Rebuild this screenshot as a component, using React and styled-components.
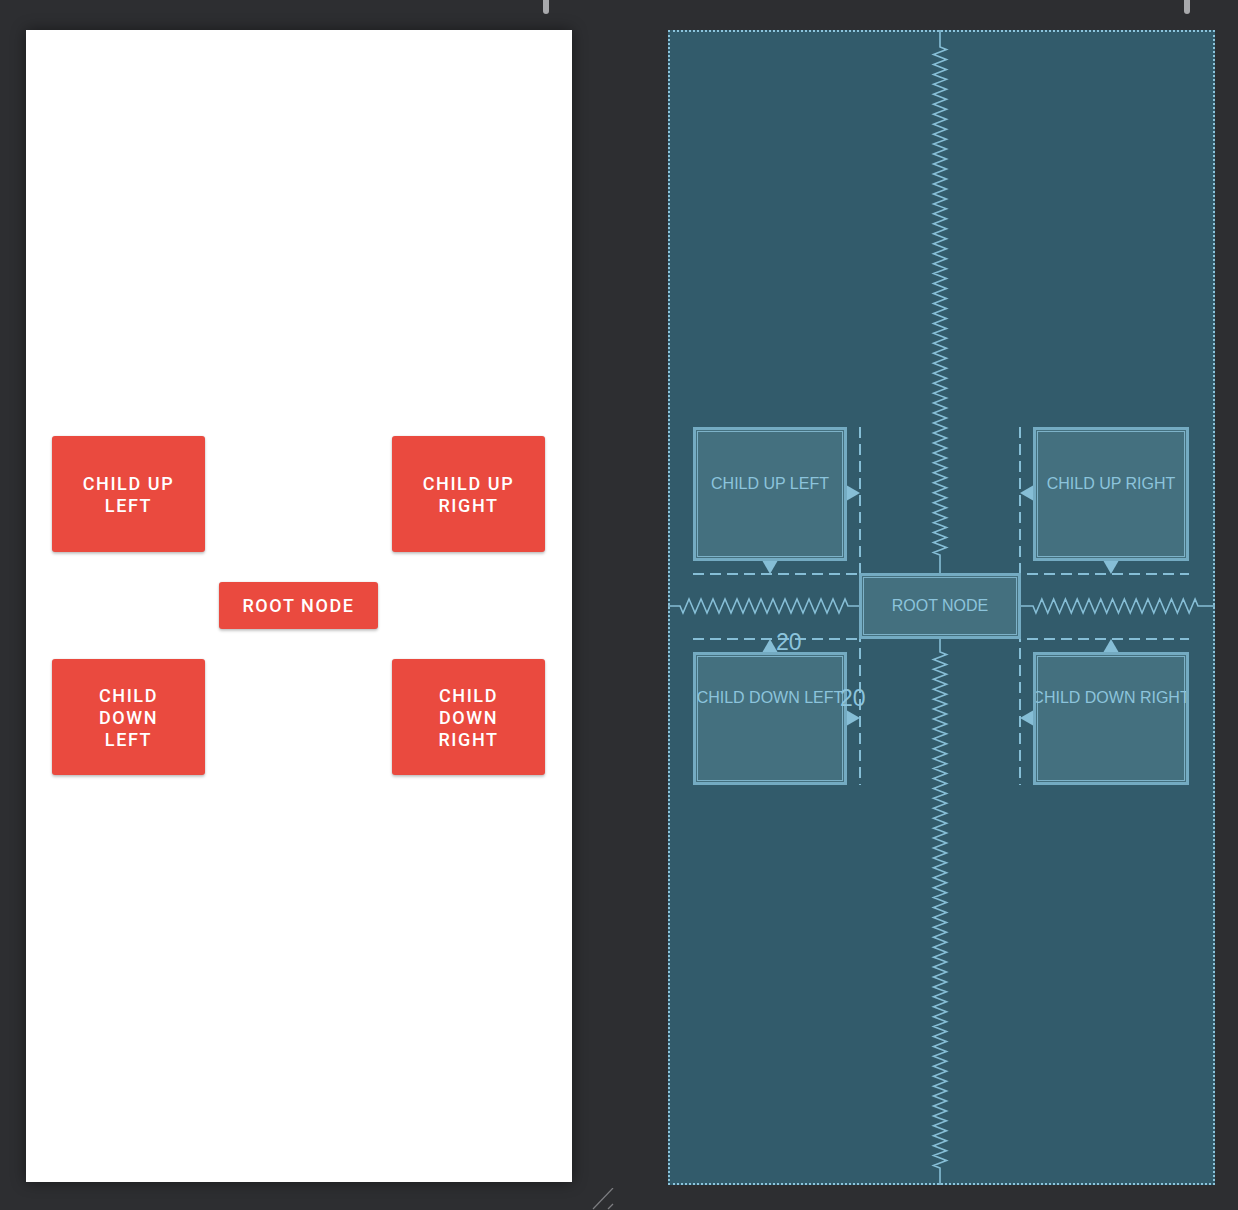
import React from 'react';
import styled, { createGlobalStyle } from 'styled-components';

const GlobalStyle = createGlobalStyle`
  html, body {
    margin: 0;
    padding: 0;
    background: #2d2e31;
  }
  body {
    font-family: 'Roboto', 'Liberation Sans', sans-serif;
  }
`;

const Workspace = styled.div`
  display: flex;
  align-items: flex-start;
  width: 1238px;
  height: 1210px;
  overflow: hidden;
  padding-left: 26px;
  box-sizing: border-box;
  background: #2d2e31;
`;

const Column = styled.div`
  display: flex;
  flex-direction: column;
  width: ${p => p.$width}px;
`;

const HandleBar = styled.div`
  display: flex;
  justify-content: flex-end;
  height: 30px;
  padding-right: ${p => p.$right}px;
`;

const Handle = styled.div`
  width: 6px;
  height: 14px;
  background: #a8a9ac;
  border-radius: 0 0 3px 3px;
`;

const Gutter = styled.div`
  display: flex;
  flex-direction: column;
  justify-content: flex-end;
  width: 96px;
  height: 1210px;
  padding-left: 19px;
  box-sizing: border-box;
`;

/* ---------- design view ---------- */

const DesignPanel = styled.div`
  display: flex;
  align-items: center;
  justify-content: center;
  height: 1152px;
  background: #ffffff;
  box-shadow: 0 0 14px rgba(0, 0, 0, 0.45);
`;

const ButtonGrid = styled.div`
  display: grid;
  grid-template-columns: 153px 159px 153px;
  grid-template-rows: 116px 47px 116px;
  column-gap: 14px;
  row-gap: 30px;
  margin: 0 1px 2px 0;
`;

const RedButton = styled.div`
  grid-column: ${p => p.$col};
  grid-row: ${p => p.$row};
  display: flex;
  align-items: center;
  justify-content: center;
  text-align: center;
  background: #ea4a3f;
  color: #ffffff;
  border-radius: 3px;
  box-shadow: 0 2px 3px rgba(0, 0, 0, 0.22), 0 0 2px rgba(0, 0, 0, 0.12);
  font-family: 'Roboto', sans-serif;
  font-weight: 500;
  font-size: 18px;
  line-height: 22px;
  letter-spacing: 1.6px;
  padding: 2px ${p => p.$pad}px 0;
`;

/* ---------- blueprint view ---------- */

const Blueprint = styled.div`
  position: relative;
  height: 1155px;
  background: #325b6b;

  &::before {
    content: '';
    position: absolute;
    inset: 0;
    border: 2px dotted #8cc4dc;
    pointer-events: none;
  }
`;

const Wires = styled.svg`
  position: absolute;
  left: 0;
  top: 0;
  overflow: visible;
`;

const Node = styled.div`
  position: absolute;
  left: ${p => p.$x}px;
  top: ${p => p.$y}px;
  width: ${p => p.$w}px;
  height: ${p => p.$h}px;
  box-sizing: border-box;
  background: #44707f;
  border: 3px solid #74abc2;
  box-shadow: inset 0 0 0 1px #44707f, inset 0 0 0 2px #7db2c8;
  display: flex;
  flex-direction: column;
  align-items: center;
  justify-content: ${p => (p.$textTop == null ? 'center' : 'flex-start')};
  padding-top: ${p => (p.$textTop == null ? 0 : p.$textTop)}px;
  overflow: hidden;
`;

const NodeLabel = styled.span`
  font-family: 'Liberation Sans', Arial, sans-serif;
  font-size: 16px;
  line-height: 18px;
  color: #8cc4dc;
  white-space: nowrap;
`;

const Margin = styled.span`
  position: absolute;
  left: ${p => p.$x}px;
  top: ${p => p.$y}px;
  font-family: 'Liberation Sans', Arial, sans-serif;
  font-size: 23px;
  line-height: 23px;
  color: #8cc4dc;
`;

const LINE = '#86bed6';

function spring(axis, fixed, from, to, leadA, leadB, period, amp) {
  const a = from + leadA;
  const b = to - leadB;
  const n = Math.max(1, Math.round((b - a) / period));
  const step = (b - a) / n;
  const pt = (along, off) =>
    axis === 'v' ? `${fixed + off} ${along}` : `${along} ${fixed + off}`;
  let d = `M${pt(from, 0)} L${pt(a, 0)}`;
  for (let i = 0; i < n; i++) {
    d += ` L${pt(a + step * (i + 0.25), amp)} L${pt(a + step * (i + 0.75), -amp)} L${pt(a + step * (i + 1), 0)}`;
  }
  d += ` L${pt(to, 0)}`;
  return d;
}

function arrow(dir, x, y) {
  // x,y = tip of arrow
  const s = 13;
  const h = 7.5;
  if (dir === 'right') return `M${x} ${y} L${x - s} ${y - h} L${x - s} ${y + h} Z`;
  if (dir === 'left') return `M${x} ${y} L${x + s} ${y - h} L${x + s} ${y + h} Z`;
  if (dir === 'down') return `M${x} ${y} L${x - h} ${y - s} L${x + h} ${y - s} Z`;
  return `M${x} ${y} L${x - h} ${y + s} L${x + h} ${y + s} Z`;
}

const guides = [
  [25, 544, 191, 544],
  [359, 544, 521, 544],
  [25, 609, 191, 609],
  [359, 609, 521, 609],
  [192, 397, 192, 755],
  [352, 397, 352, 755],
];

const arrows = [
  ['right', 192, 463],
  ['down', 102, 544],
  ['up', 102, 609],
  ['right', 192, 688],
  ['left', 352, 463],
  ['down', 443, 544],
  ['up', 443, 609],
  ['left', 352, 688],
];

function BlueprintWires() {
  return (
    <Wires width="547" height="1155" viewBox="0 0 547 1155">
      <g stroke={LINE} strokeWidth="2" strokeDasharray="11 6" fill="none">
        {guides.map(([x1, y1, x2, y2], i) => (
          <line key={i} x1={x1} y1={y1} x2={x2} y2={y2} />
        ))}
      </g>
      <g stroke={LINE} strokeWidth="1.6" fill="none" strokeLinejoin="miter">
        <path d={spring('v', 272, 0, 543, 17, 18, 10, 6.5)} />
        <path d={spring('v', 272, 609, 1155, 13, 17, 10, 6.5)} />
        <path d={spring('h', 576, 0, 191, 12, 11, 12, 7)} />
        <path d={spring('h', 576, 353, 547, 12, 17, 12, 7)} />
      </g>
      <g fill={LINE}>
        {arrows.map(([dir, x, y], i) => (
          <path key={i} d={arrow(dir, x, y)} />
        ))}
      </g>
    </Wires>
  );
}

const designButtons = [
  { col: 1, row: 1, pad: 24, text: 'Child Up Left' },
  { col: 3, row: 1, pad: 24, text: 'Child Up Right' },
  { col: 2, row: 2, pad: 14, text: 'Root Node' },
  { col: 1, row: 3, pad: 24, text: 'Child Down Left' },
  { col: 3, row: 3, pad: 24, text: 'Child Down Right' },
];

const blueprintNodes = [
  { x: 25, y: 397, w: 154, h: 134, textTop: 45, text: 'CHILD UP LEFT' },
  { x: 365, y: 397, w: 156, h: 134, textTop: 45, text: 'CHILD UP RIGHT' },
  { x: 191, y: 543, w: 162, h: 66, text: 'ROOT NODE' },
  { x: 25, y: 622, w: 154, h: 133, textTop: 34, text: 'CHILD DOWN LEFT' },
  { x: 365, y: 622, w: 156, h: 133, textTop: 34, text: 'CHILD DOWN RIGHT' },
];

function ResizeGrip() {
  return (
    <svg width="24" height="22" viewBox="0 0 24 22">
      <g stroke="#7d7e82" strokeWidth="1.2">
        <line x1="22" y1="0" x2="2" y2="21" />
        <line x1="22" y1="16" x2="17" y2="21" />
      </g>
    </svg>
  );
}

export default function App() {
  return (
    <>
      <GlobalStyle />
      <Workspace>
        <Column $width={546}>
          <HandleBar $right={23}>
            <Handle />
          </HandleBar>
          <DesignPanel>
            <ButtonGrid>
              {designButtons.map(b => (
                <RedButton key={b.text} $col={b.col} $row={b.row} $pad={b.pad}>
                  {b.text.toUpperCase()}
                </RedButton>
              ))}
            </ButtonGrid>
          </DesignPanel>
        </Column>
        <Gutter>
          <ResizeGrip />
        </Gutter>
        <Column $width={547}>
          <HandleBar $right={25}>
            <Handle />
          </HandleBar>
          <Blueprint>
            <BlueprintWires />
            {blueprintNodes.map(n => (
              <Node key={n.text} $x={n.x} $y={n.y} $w={n.w} $h={n.h} $textTop={n.textTop}>
                <NodeLabel>{n.text}</NodeLabel>
              </Node>
            ))}
            <Margin $x={108} $y={601}>20</Margin>
            <Margin $x={172} $y={657}>20</Margin>
          </Blueprint>
        </Column>
      </Workspace>
    </>
  );
}
